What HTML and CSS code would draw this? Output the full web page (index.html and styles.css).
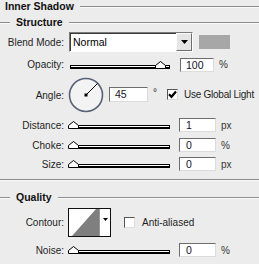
FILE: index.html
```html
<!DOCTYPE html>
<html>
<head>
<meta charset="utf-8">
<link rel="stylesheet" href="styles.css">
</head>
<body>
<div class="panel">
  <div class="title"><span class="title-text">Inner Shadow</span><span class="rule"></span></div>

  <div class="group-head head-structure"><span class="rule short"></span><span class="group-text">Structure</span><span class="rule"></span></div>

  <div class="row row-blend">
    <span class="lbl">Blend Mode:</span>
    <div class="select"><span class="select-text">Normal</span><span class="select-btn"><svg width="7" height="4" viewBox="0 0 7 4"><path d="M0 0H7L3.5 4Z" fill="#000"/></svg></span></div>
    <span class="swatch"></span>
  </div>

  <div class="row row-opacity">
    <span class="lbl">Opacity:</span>
    <div class="slider"><span class="track"></span><svg class="thumb thumb-right" width="11" height="8" viewBox="0 0 11 8"><path d="M0.5 7.5V4.5L5.5 0.5L10.5 4.5V7.5Z" fill="#fff" stroke="#000"/></svg></div>
    <span class="num">100</span><span class="unit">%</span>
  </div>

  <div class="row row-angle">
    <span class="lbl">Angle:</span>
    <svg class="dial" width="36" height="36" viewBox="0 0 36 36">
      <circle cx="18" cy="18" r="16.5" fill="#f3f3f3" stroke="#5a6278" stroke-width="1.6"/>
      <line x1="18" y1="18" x2="29.5" y2="6.5" stroke="#000" stroke-width="1"/>
      <rect x="16.5" y="16.5" width="3" height="3" fill="#000"/>
    </svg>
    <span class="num num-angle">45</span><span class="deg">°</span>
    <span class="check checked"><svg width="9" height="9" viewBox="0 0 9 9"><path d="M1 4.2L3.5 6.8L8 1.5" fill="none" stroke="#000" stroke-width="2.2"/></svg></span>
    <span class="check-label">Use Global Light</span>
  </div>

  <div class="row row-small row-distance">
    <span class="lbl">Distance:</span>
    <div class="slider"><span class="track"></span><svg class="thumb thumb-left" width="11" height="8" viewBox="0 0 11 8"><path d="M0.5 7.5V4.5L5.5 0.5L10.5 4.5V7.5Z" fill="#fff" stroke="#000"/></svg></div>
    <span class="num">1</span><span class="unit">px</span>
  </div>

  <div class="row row-small row-choke">
    <span class="lbl">Choke:</span>
    <div class="slider"><span class="track"></span><svg class="thumb thumb-left" width="11" height="8" viewBox="0 0 11 8"><path d="M0.5 7.5V4.5L5.5 0.5L10.5 4.5V7.5Z" fill="#fff" stroke="#000"/></svg></div>
    <span class="num">0</span><span class="unit">%</span>
  </div>

  <div class="row row-small row-size">
    <span class="lbl">Size:</span>
    <div class="slider"><span class="track"></span><svg class="thumb thumb-left" width="11" height="8" viewBox="0 0 11 8"><path d="M0.5 7.5V4.5L5.5 0.5L10.5 4.5V7.5Z" fill="#fff" stroke="#000"/></svg></div>
    <span class="num">0</span><span class="unit">px</span>
  </div>

  <div class="separator"></div>

  <div class="group-head head-quality"><span class="rule short"></span><span class="group-text">Quality</span><span class="rule"></span></div>

  <div class="row row-contour">
    <span class="lbl">Contour:</span>
    <div class="contour">
      <svg class="contour-preview" width="30" height="27" viewBox="0 0 30 27"><rect width="30" height="27" fill="#fff"/><path d="M3 27L27 0H30V27Z" fill="#7f7f7f"/></svg>
      <span class="contour-btn"><svg width="5" height="3" viewBox="0 0 5 3"><path d="M0 0H5L2.5 3Z" fill="#000"/></svg></span>
    </div>
    <span class="check check-aa"></span>
    <span class="check-label">Anti-aliased</span>
  </div>

  <div class="row row-small row-noise">
    <span class="lbl">Noise:</span>
    <div class="slider"><span class="track"></span><svg class="thumb thumb-left" width="11" height="8" viewBox="0 0 11 8"><path d="M0.5 7.5V4.5L5.5 0.5L10.5 4.5V7.5Z" fill="#fff" stroke="#000"/></svg></div>
    <span class="num">0</span><span class="unit">%</span>
  </div>
</div>
</body>
</html>
```

FILE: styles.css
```css
html, body {
  margin: 0;
  padding: 0;
  background: #ececec;
}
body {
  font-family: "Liberation Sans", Arial, sans-serif;
  font-size: 10px;
  color: #1e1e1e;
  width: 259px;
  height: 264px;
  overflow: hidden;
}
.panel {
  display: flex;
  flex-direction: column;
}
.title {
  display: flex;
  align-items: center;
  height: 12px;
  padding-left: 5px;
  margin-top: 0;
}
.title-text, .group-text {
  font-weight: bold;
  font-size: 10.5px;
  color: #111;
  white-space: nowrap;
}
.rule {
  flex: 1;
  height: 1px;
  background: #8e8e8e;
  box-shadow: 0 1px 0 #fafafa;
  margin-left: 6px;
}
.rule.short {
  flex: none;
  width: 10px;
  margin-left: 0;
  margin-right: 6px;
}
.group-head {
  display: flex;
  align-items: center;
  height: 12px;
}
.head-structure { margin-top: 4px; }
.head-quality { margin-top: 11px; }
.head-quality .rule:last-child { margin-left: 6px; }

.separator {
  height: 1px;
  margin-top: 8px;
  background: #8a8a8a;
  box-shadow: 0 1px 0 #fafafa;
}

.row {
  display: flex;
  align-items: center;
}
.lbl {
  flex: none;
  width: 64px;
  text-align: right;
  white-space: nowrap;
}
.row-blend { margin-top: 4px; height: 20px; }
.row-opacity { margin-top: 5px; height: 15px; }
.row-angle { margin-top: 5px; height: 36px; }
.row-small { height: 14px; }
.row-distance { margin-top: 5px; }
.row-choke { margin-top: 6px; }
.row-size { margin-top: 5px; }
.row-contour { margin-top: 5px; height: 29px; }
.row-noise { margin-top: 6px; }

.select {
  margin-left: 5px;
  box-sizing: border-box;
  width: 124px;
  height: 20px;
  border: 1px solid;
  border-color: #7a7a7a #fdfdfd #fdfdfd #7a7a7a;
  background: #fff;
  display: flex;
  align-items: center;
  box-shadow: inset 1px 1px 0 #3c3c3c;
}
.select-text {
  flex: 1;
  padding-left: 3px;
  font-size: 10.5px;
  color: #000;
}
.select-btn {
  box-sizing: border-box;
  width: 16px;
  height: 18px;
  background: #e6e6e6;
  border: 1px solid;
  border-color: #fcfcfc #6e6e6e #6e6e6e #fcfcfc;
  display: flex;
  align-items: center;
  justify-content: center;
}
.swatch {
  margin-left: 6px;
  width: 31px;
  height: 14px;
  background: #a7a7a7;
}

.slider {
  position: relative;
  width: 102px;
  height: 14px;
  margin-left: 4px;
  flex: none;
}
.track {
  position: absolute;
  left: 2px;
  right: 0;
  bottom: 3px;
  height: 1px;
  background: #fff;
  border: 1px solid #000;
  border-bottom-width: 2px;
}
.thumb {
  position: absolute;
  bottom: 3px;
}
.thumb-left { left: 0; }
.thumb-right { right: 4px; }
.row-opacity .slider { margin-left: 4px; }
.row-opacity .num { margin-left: 10px; width: 34px; padding-left: 5px; }

.num {
  flex: none;
  box-sizing: border-box;
  width: 37px;
  height: 14px;
  margin-left: 9px;
  border: 1px solid;
  border-color: #6d6d6d #dcdcdc #dcdcdc #6d6d6d;
  background: #fff;
  padding-left: 6px;
  line-height: 12px;
  font-size: 10.5px;
  color: #14142a;
}
.unit {
  margin-left: 5px;
  color: #333;
}
.dial {
  flex: none;
  margin-left: 4px;
}
.num-angle {
  margin-left: 5px;
  width: 39px;
  height: 15px;
  padding-left: 5px;
  margin-top: -2px;
}
.deg {
  margin-left: 5px;
  margin-top: -6px;
}
.check {
  flex: none;
  box-sizing: border-box;
  width: 11px;
  height: 11px;
  margin-left: 10px;
  border: 1px solid;
  border-color: #555 #ddd #ddd #555;
  background: #fff;
  display: flex;
  align-items: center;
  justify-content: center;
}
.row-angle .check { margin-top: -2px; }
.check-label {
  margin-left: 6px;
  white-space: nowrap;
}
.row-angle .check-label {
  margin-top: -2px;
  letter-spacing: -0.25px;
}

.contour {
  flex: none;
  margin-left: 4px;
  box-sizing: border-box;
  width: 43px;
  height: 29px;
  border: 1px solid #111;
  background: #fff;
  display: flex;
}
.contour-preview {
  flex: none;
  display: block;
}
.contour-btn {
  flex: 1;
  border-left: 1px solid #999;
  display: flex;
  align-items: center;
  justify-content: center;
  padding-bottom: 6px;
}
.check-aa {
  margin-left: 13px;
  margin-top: -1px;
}
.row-contour .check-label { margin-left: 7px; }
```
